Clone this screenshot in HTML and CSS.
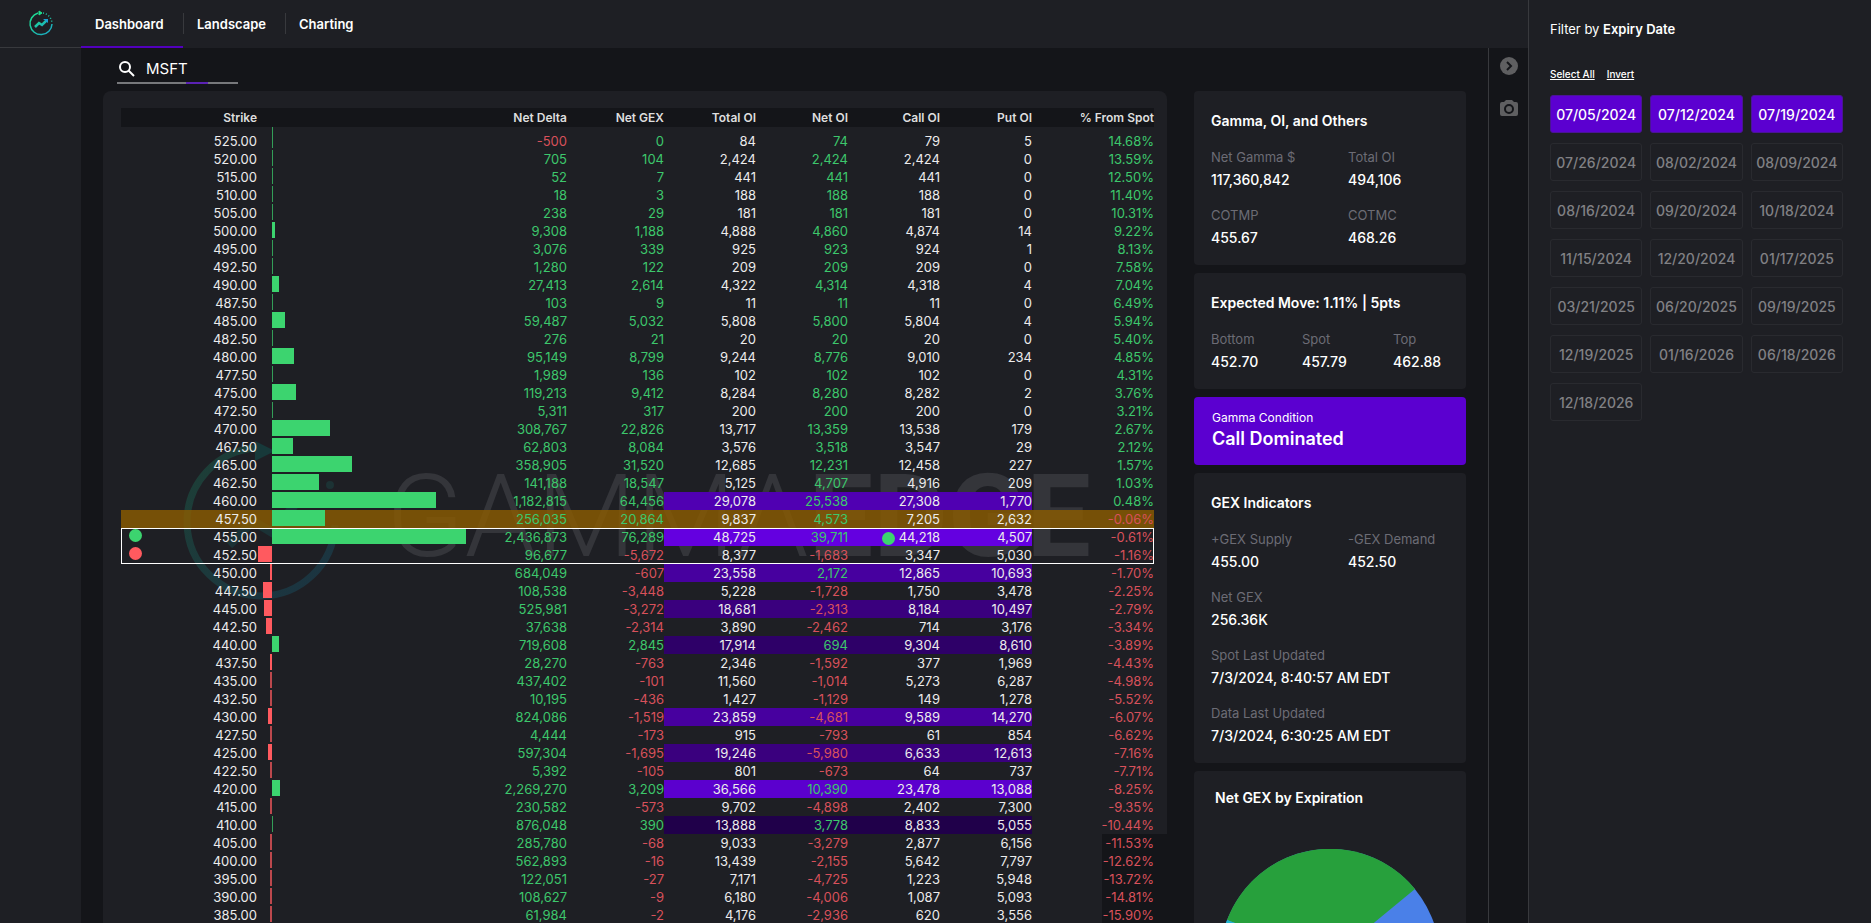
FILE: index.html
```html
<!DOCTYPE html>
<html lang="en">
<head>
    <meta charset="UTF-8">
    <meta name="viewport" content="width=device-width, initial-scale=1.0">
    <title>GammaEdge Dashboard</title>
    <link rel="stylesheet" href="styles.css">
</head>
<body>

<div class="workspace">
    <header class="topbar">
        <a class="logo" href="#" aria-label="Home">
            <svg width="26" height="28" viewBox="0 0 26 28" fill="none">
                <defs>
                    <linearGradient id="brand" x1="0" y1="0" x2="1" y2="1">
                        <stop offset="0" stop-color="#1ee08c"/>
                        <stop offset="1" stop-color="#1ba6c8"/>
                    </linearGradient>
                </defs>
                <path d="M10 4A11 11 0 1 0 24 15" stroke="url(#brand)" stroke-width="1.5"/>
                <path d="M15 4A11 11 0 0 1 24 14" stroke="#1fc6a8" stroke-width="1.5" stroke-dasharray="1 2"/>
                <path d="M11 2l3 2-3 2z" fill="#1ee08c" stroke="#1ee08c"/>
                <path d="M7 18l4-4 3 2 5-5" stroke="url(#brand)" stroke-width="2.500"/>
                <path d="M15 10h5v4z" fill="#1d9fd6"/>
            </svg>
        </a>
        <nav class="tabs">
            <a class="tab active" href="#">Dashboard</a>
            <a class="tab" href="#">Landscape</a>
            <a class="tab" href="#">Charting</a>
        </nav>
    </header>

    <div class="below">
        <aside class="sidebar"></aside>

        <main class="content">
            <label class="search" for="symbol">
                <svg width="16" height="16" viewBox="0 0 16 16" fill="none" stroke="#fff" stroke-width="2">
                    <circle cx="6" cy="6" r="5"/>
                    <path d="M9.500 9.500L15 15"/>
                </svg>
                <input type="text" id="symbol" value="MSFT" aria-label="Symbol">
            </label>

            <div class="columns">
                <section class="panel">
                    <div class="watermark" aria-hidden="true">
                        <svg width="160" height="160" viewBox="0 0 160 160" fill="none">
                            <defs>
                                <linearGradient id="fade" x1="0" y1="0" x2="1" y2="1">
                                    <stop offset="0" stop-color="#1d3f36"/>
                                    <stop offset="1" stop-color="#1b3342"/>
                                </linearGradient>
                            </defs>
                            <path d="M76 7A74 74 0 1 0 154 84" stroke="url(#fade)" stroke-width="7"/>
                            <path d="M74 0l20 10-20 10z" fill="#17393a"/>
                            <circle cx="125" cy="20" r="3" fill="#1c3234"/>
                            <circle cx="149" cy="44" r="4" fill="#1c3234"/>
                            <path d="M48 104l24-24 20 12 26-34" stroke="#1b3236" stroke-width="9"/>
                        </svg>
                        <span class="wordmark">GAMMA<b>EDGE</b></span>
                    </div>
                    <table class="chain">
                        <colgroup>
                            <col class="c-strike"><col class="c-bar"><col class="c-delta"><col class="c-gex">
                            <col class="c-oi"><col class="c-oi"><col class="c-oi"><col class="c-oi"><col class="c-spot">
                        </colgroup>
                        <thead>
                            <tr>
                                <th>Strike</th>
                                <th></th>
                                <th>Net Delta</th>
                                <th>Net GEX</th>
                                <th>Total OI</th>
                                <th>Net OI</th>
                                <th>Call OI</th>
                                <th>Put OI</th>
                                <th>% From Spot</th>
                            </tr>
                            <tr class="spacer"><td></td><td><div class="bar-track"><div class="neg-side"></div><div class="bar up tiny"></div></div></td></tr>
                        </thead>
                        <tbody id="above"></tbody>
                        <tbody id="levels" class="levels"></tbody>
                        <tbody id="below"></tbody>
                    </table>
                </section>

                <section class="cards">
                    <article class="card">
                        <h2>Gamma, OI, and Others</h2>
                        <dl class="stats two">
                            <div><dt>Net Gamma $</dt><dd>117,360,842</dd></div>
                            <div><dt>Total OI</dt><dd>494,106</dd></div>
                            <div><dt>COTMP</dt><dd>455.67</dd></div>
                            <div><dt>COTMC</dt><dd>468.26</dd></div>
                        </dl>
                    </article>
                    <article class="card">
                        <h2>Expected Move: 1.11% | 5pts</h2>
                        <dl class="stats three">
                            <div><dt>Bottom</dt><dd>452.70</dd></div>
                            <div><dt>Spot</dt><dd>457.79</dd></div>
                            <div><dt>Top</dt><dd>462.88</dd></div>
                        </dl>
                    </article>
                    <article class="card condition">
                        <p>Gamma Condition</p>
                        <h2>Call Dominated</h2>
                    </article>
                    <article class="card">
                        <h2>GEX Indicators</h2>
                        <dl class="stats two">
                            <div><dt>+GEX Supply</dt><dd>455.00</dd></div>
                            <div><dt>-GEX Demand</dt><dd>452.50</dd></div>
                            <div class="wide"><dt>Net GEX</dt><dd>256.36K</dd></div>
                            <div class="wide"><dt>Spot Last Updated</dt><dd>7/3/2024, 8:40:57 AM EDT</dd></div>
                            <div class="wide"><dt>Data Last Updated</dt><dd>7/3/2024, 6:30:25 AM EDT</dd></div>
                        </dl>
                    </article>
                    <article class="card expiration">
                        <h2>Net GEX by Expiration</h2>
                        <svg class="pie" width="220" height="220" viewBox="-110 -110 220 220">
                            <circle r="110" fill="#4a80e8"/>
                            <path d="M0 0L-103 -39A110 110 0 0 1 85 -70z" fill="#27a03c"/>
                            <path d="M0 0L-103 -39A110 110 0 0 0 -78 78z" fill="#1fb5cf"/>
                        </svg>
                    </article>
                </section>
            </div>
        </main>

        <aside class="rail">
            <button type="button" aria-label="Collapse filter">
                <svg width="18" height="18" viewBox="0 0 18 18">
                    <circle cx="9" cy="9" r="9" fill="#5f5f61"/>
                    <path d="M7 5l4 4-4 4" fill="none" stroke="#141519" stroke-width="2"/>
                </svg>
            </button>
            <button type="button" aria-label="Take snapshot">
                <svg width="18" height="18" viewBox="0 0 18 18">
                    <path d="M6 1h6l2 2h2a2 2 0 0 1 2 2v10a2 2 0 0 1-2 2H2a2 2 0 0 1-2-2V5a2 2 0 0 1 2-2h2z" fill="#5f5f61"/>
                    <circle cx="9" cy="10" r="4" fill="#5f5f61" stroke="#141519" stroke-width="2"/>
                </svg>
            </button>
        </aside>
    </div>
</div>

<aside class="filter">
    <h2>Filter by <b>Expiry Date</b></h2>
    <div class="filter-links">
        <a href="#">Select All</a>
        <a href="#">Invert</a>
    </div>
    <div class="dates">
        <button type="button" class="on">07/05/2024</button>
        <button type="button" class="on">07/12/2024</button>
        <button type="button" class="on">07/19/2024</button>
        <button type="button">07/26/2024</button>
        <button type="button">08/02/2024</button>
        <button type="button">08/09/2024</button>
        <button type="button">08/16/2024</button>
        <button type="button">09/20/2024</button>
        <button type="button">10/18/2024</button>
        <button type="button">11/15/2024</button>
        <button type="button">12/20/2024</button>
        <button type="button">01/17/2025</button>
        <button type="button">03/21/2025</button>
        <button type="button">06/20/2025</button>
        <button type="button">09/19/2025</button>
        <button type="button">12/19/2025</button>
        <button type="button">01/16/2026</button>
        <button type="button">06/18/2026</button>
        <button type="button">12/18/2026</button>
    </div>
</aside>

<script src="script.js"></script>
</body>
</html>
```
FILE: styles.css
```css
* {
    box-sizing: border-box;
}

body {
    margin: 0;
    height: 100vh;
    display: flex;
    overflow: hidden;
    background-color: #141519;
    color: #fff;
    font-family: Inter, sans-serif;
    font-size: 14px;
}

h2, p, dl, dd {
    margin: 0;
}

a {
    color: inherit;
    text-decoration: none;
}

button {
    font-family: inherit;
    cursor: pointer;
}

.workspace {
    flex: 1;
    min-width: 0;
    display: flex;
    flex-direction: column;
}

/* Top bar */
.topbar {
    flex: none;
    height: 48px;
    display: flex;
    background-color: #1e1f24;
}

.logo {
    width: 81px;
    padding: 9px 0 0 28px;
    border-bottom: 1px solid #38393d;
}

.tabs {
    display: flex;
}

.tab {
    width: 102px;
    padding-left: 14px;
    line-height: 49px;
    font-weight: 600;
    font-size: 13px;
    position: relative;
}

.tab.active {
    border-bottom: 2px solid #5200bd;
}

/* divider between two tabs */
.tab + .tab::before {
    content: "";
    position: absolute;
    left: 0;
    top: 13px;
    height: 21px;
    border-left: 1px solid #38393d;
}

.below {
    flex: 1;
    min-height: 0;
    display: flex;
}

.sidebar {
    width: 81px;
    background-color: #1e1f24;
}

.content {
    flex: 1;
    min-width: 0;
    overflow: hidden;
    padding: 0 22px 0 22px;
}

/* Search box */
.search {
    width: 121px;
    height: 36px;
    margin: 0 0 7px 14px;
    padding: 7px 0 0 2px;
    display: flex;
    align-items: center;
    gap: 11px;
    border-bottom: 2px solid;
    border-image: linear-gradient(to right, #77787b 57%, #5b22b4 57%, #5b22b4 75%, #77787b 75%) 1;
}

.search input {
    width: 90px;
    padding: 0;
    border: none;
    outline: none;
    background: none;
    color: #fff;
    font-family: inherit;
    font-size: 15px;
}

.columns {
    display: flex;
    align-items: flex-start;
    gap: 27px;
}

/* Option chain */
.panel {
    flex: 1;
    min-width: 0;
    position: relative;
    padding: 17px 13px 17px 18px;
    background-color: #1e1f24;
    border-radius: 8px;
}

.watermark {
    position: absolute;
    top: 350px;
    left: 78px;
    display: flex;
    align-items: flex-start;
    gap: 45px;
}

.wordmark {
    color: #34353a;
    font-family: Roboto, sans-serif;
    font-size: 115px;
    font-weight: 300;
    line-height: 152px;
}

.wordmark b {
    font-weight: 700;
}

.chain {
    position: relative;
    width: 100%;
    table-layout: fixed;
    border-collapse: collapse;
    font-size: 13px;
    line-height: 18px;
    text-align: right;
    color: #ececec;
}

.c-strike { width: 136px; }
.c-delta { width: 98px; }
.c-gex { width: 97px; }
.c-oi { width: 92px; }
.c-spot { width: 122px; }

.chain th,
.chain td {
    padding: 0;
    height: 18px;
    white-space: nowrap;
}

.chain th {
    height: 19px;
    background-color: #141519;
    font-size: 12px;
    font-weight: 600;
    line-height: 19px;
    color: #dedede;
}

.chain .spacer td {
    height: 5px;
    line-height: 5px;
}

.chain .spacer .bar-track,
.chain .spacer .bar {
    height: 5px;
}

.gain { color: #3dc76c; }
.loss { color: #d8515b; }

.bar-track {
    height: 18px;
    display: flex;
}

.neg-side {
    width: 15px;
    display: flex;
    justify-content: flex-end;
}

.bar {
    height: 16px;
}

.bar.up { background-color: #3cd46f; }
.bar.down { background-color: #ff5a5f; }

.bar.tiny {
    width: 1px;
    opacity: 0.7;
}

.bar.down.tiny {
    width: 2px;
}

.spot-row td { background-color: rgba(140, 92, 0, 0.8); }

/* supply and demand strikes */
.levels {
    outline: 1px solid #fff;
    outline-offset: -1px;
}

.heat-1 { background-color: #20004a; }
.heat-2 { background-color: #2e0068; }
.heat-3 { background-color: #3a007e; }
.heat-4 { background-color: #47009f; }
.heat-5 { background-color: #5000b2; }
.heat-6 { background-color: #5b00ce; }
.heat-7 { background-color: #6400e0; }

.chain .far {
    background: linear-gradient(to right, transparent 70px, #141519 70px);
    box-shadow: 13px 0 #141519;
}

.dot {
    display: inline-block;
    width: 13px;
    height: 13px;
    border-radius: 50%;
    vertical-align: -3px;
}

.dot.green { background-color: #3cd46f; }
.dot.red { background-color: #ff5a5f; }

.dot.lead {
    float: left;
    margin: 1px 0 0 8px;
}

.dot.inline { margin-right: 4px; }

/* Cards */
.cards {
    flex: none;
    width: 272px;
    display: flex;
    flex-direction: column;
    gap: 8px;
}

.card {
    padding: 20px 0 17px 17px;
    background-color: #1e1f24;
    border-radius: 4px;
}

.card h2 {
    margin-bottom: 17px;
    font-size: 14px;
    font-weight: 600;
    line-height: 20px;
}

.stats {
    display: grid;
    row-gap: 16px;
    white-space: nowrap;
}

.stats.two { grid-template-columns: 137px 1fr; }
.stats.three { grid-template-columns: 91px 91px 1fr; }
.stats .wide { grid-column: 1 / -1; }

.stats dt {
    margin-bottom: 4px;
    color: #6c6c75;
    font-size: 13px;
    line-height: 18px;
}

.stats dd {
    font-weight: 500;
    line-height: 20px;
}

.card.condition {
    padding: 12px 18px 14px;
    background-color: #5b00d0;
}

.condition p {
    font-size: 12px;
    line-height: 18px;
}

.card.condition h2 {
    margin: 0;
    font-size: 18px;
    line-height: 24px;
}

.card.expiration {
    padding: 17px 21px 20px;
}

.pie {
    display: block;
    margin: 41px auto 0;
}

/* Icon rail */
.rail {
    width: 40px;
    padding-top: 9px;
    display: flex;
    flex-direction: column;
    align-items: center;
    gap: 24px;
    border-left: 1px solid #38393d;
}

.rail button {
    display: flex;
    padding: 0;
    border: none;
    background: none;
}

/* Expiry filter */
.filter {
    flex: none;
    width: 343px;
    padding: 19px 28px 0 21px;
    background-color: #1e1f24;
    border-left: 1px solid #38393d;
}

.filter h2 {
    font-size: 13px;
    font-weight: 400;
    line-height: 20px;
}

.filter h2 b {
    font-weight: 600;
}

.filter-links {
    margin: 27px 0 13px;
    display: flex;
    gap: 12px;
    font-size: 10px;
    font-weight: 500;
    line-height: 16px;
}

.filter-links a {
    text-decoration: underline;
}

.dates {
    display: grid;
    grid-template-columns: repeat(3, 1fr);
    gap: 10px 8px;
}

.dates button {
    height: 38px;
    padding: 0;
    background: none;
    border: 1px solid #292a2f;
    border-radius: 3px;
    color: #818184;
    font-size: 14px;
    font-weight: 500;
}

.dates button.on {
    background-color: #5b00d0;
    border-color: #4a1496;
    color: #fff;
}
```
FILE: script.js
```js
// strike, net delta, net gex, total oi, net oi, call oi, put oi, % from spot, heat
const above = [
    [525, -500, 0, 84, 74, 79, 5, 14.68],
    [520, 705, 104, 2424, 2424, 2424, 0, 13.59],
    [515, 52, 7, 441, 441, 441, 0, 12.5],
    [510, 18, 3, 188, 188, 188, 0, 11.4],
    [505, 238, 29, 181, 181, 181, 0, 10.31],
    [500, 9308, 1188, 4888, 4860, 4874, 14, 9.22],
    [495, 3076, 339, 925, 923, 924, 1, 8.13],
    [492.5, 1280, 122, 209, 209, 209, 0, 7.58],
    [490, 27413, 2614, 4322, 4314, 4318, 4, 7.04],
    [487.5, 103, 9, 11, 11, 11, 0, 6.49],
    [485, 59487, 5032, 5808, 5800, 5804, 4, 5.94],
    [482.5, 276, 21, 20, 20, 20, 0, 5.4],
    [480, 95149, 8799, 9244, 8776, 9010, 234, 4.85],
    [477.5, 1989, 136, 102, 102, 102, 0, 4.31],
    [475, 119213, 9412, 8284, 8280, 8282, 2, 3.76],
    [472.5, 5311, 317, 200, 200, 200, 0, 3.21],
    [470, 308767, 22826, 13717, 13359, 13538, 179, 2.67],
    [467.5, 62803, 8084, 3576, 3518, 3547, 29, 2.12],
    [465, 358905, 31520, 12685, 12231, 12458, 227, 1.57],
    [462.5, 141188, 18547, 5125, 4707, 4916, 209, 1.03],
    [460, 1182815, 64456, 29078, 25538, 27308, 1770, 0.48, 5],
    [457.5, 256035, 20864, 9837, 4573, 7205, 2632, -0.06]
];

const levels = [
    [455, 2436873, 76289, 48725, 39711, 44218, 4507, -0.61, 7],
    [452.5, 96677, -5672, 8377, -1683, 3347, 5030, -1.16]
];

const below = [
    [450, 684049, -607, 23558, 2172, 12865, 10693, -1.7, 4],
    [447.5, 108538, -3448, 5228, -1728, 1750, 3478, -2.25],
    [445, 525981, -3272, 18681, -2313, 8184, 10497, -2.79, 3],
    [442.5, 37638, -2314, 3890, -2462, 714, 3176, -3.34],
    [440, 719608, 2845, 17914, 694, 9304, 8610, -3.89, 2],
    [437.5, 28270, -763, 2346, -1592, 377, 1969, -4.43],
    [435, 437402, -101, 11560, -1014, 5273, 6287, -4.98],
    [432.5, 10195, -436, 1427, -1129, 149, 1278, -5.52],
    [430, 824086, -1519, 23859, -4681, 9589, 14270, -6.07, 4],
    [427.5, 4444, -173, 915, -793, 61, 854, -6.62],
    [425, 597304, -1695, 19246, -5980, 6633, 12613, -7.16, 3],
    [422.5, 5392, -105, 801, -673, 64, 737, -7.71],
    [420, 2269270, 3209, 36566, 10390, 23478, 13088, -8.25, 6],
    [415, 230582, -573, 9702, -4898, 2402, 7300, -9.35],
    [410, 876048, 390, 13888, 3778, 8833, 5055, -10.44, 1],
    [405, 285780, -68, 9033, -3279, 2877, 6156, -11.53],
    [400, 562893, -16, 13439, -2155, 5642, 7797, -12.62],
    [395, 122051, -27, 7171, -4725, 1223, 5948, -13.72],
    [390, 108627, -9, 6180, -4006, 1087, 5093, -14.81],
    [385, 61984, -2, 4176, -2936, 620, 3556, -15.9]
];

const MAX_GEX = 76289;
const MAX_BAR = 194;

function num(value) {
    return value.toLocaleString('en-US');
}

function tone(value) {
    return value < 0 ? 'loss' : 'gain';
}

function bar(gex) {
    const width = Math.round(Math.abs(gex) / MAX_GEX * MAX_BAR);
    const dir = gex < 0 ? 'down' : 'up';
    const el = width < 2
        ? `<div class="bar ${dir} tiny"></div>`
        : `<div class="bar ${dir}" style="width:${width}px"></div>`;
    if (gex < 0) {
        return `<div class="bar-track"><div class="neg-side">${el}</div></div>`;
    }
    return `<div class="bar-track"><div class="neg-side"></div>${el}</div>`;
}

function renderRow(row) {
    const [strike, delta, gex, total, net, call, put, spot, heat] = row;
    const heatClass = heat ? `heat-${heat}` : '';
    let marker = '';
    if (strike === 455) marker = '<span class="dot green lead"></span>';
    if (strike === 452.5) marker = '<span class="dot red lead"></span>';
    const callDot = strike === 455 ? '<span class="dot green inline"></span>' : '';

    return `<tr class="${strike === 457.5 ? 'spot-row' : ''}">
        <td>${marker}${strike.toFixed(2)}</td>
        <td>${bar(gex)}</td>
        <td class="${tone(delta)}">${num(delta)}</td>
        <td class="${tone(gex)}">${num(gex)}</td>
        <td class="${heatClass}">${num(total)}</td>
        <td class="${heatClass} ${tone(net)}">${num(net)}</td>
        <td class="${heatClass}">${callDot}${num(call)}</td>
        <td class="${heatClass}">${num(put)}</td>
        <td class="${tone(spot)} ${spot < -11 ? 'far' : ''}">${spot.toFixed(2)}%</td>
    </tr>`;
}

document.getElementById('above').innerHTML = above.map(renderRow).join('');
document.getElementById('levels').innerHTML = levels.map(renderRow).join('');
document.getElementById('below').innerHTML = below.map(renderRow).join('');
```
